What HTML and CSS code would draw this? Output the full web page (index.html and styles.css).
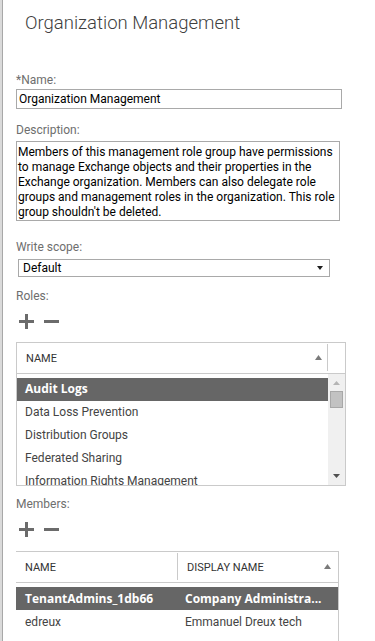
FILE: index.html
```html
<!DOCTYPE html>
<html>
<head>
<meta charset="utf-8">
<link rel="stylesheet" href="styles.css">
</head>
<body>
<div class="page">
  <div class="edge"></div>
  <div class="content">
    <h1 class="title">Organization Management</h1>

    <div class="label label-name">*Name:</div>
    <div class="input">Organization Management</div>

    <div class="label label-desc">Description:</div>
    <div class="textarea">Members of this management role group have permissions<br>to manage Exchange objects and their properties in the<br>Exchange organization. Members can also delegate role<br>groups and management roles in the organization. This role<br>group shouldn't be deleted.</div>

    <div class="label label-scope">Write scope:</div>
    <div class="select">
      <span>Default</span>
      <svg class="dd" width="6" height="4" viewBox="0 0 6 4"><path d="M0 0H6L3 4Z" fill="#1e1e1e"/></svg>
    </div>

    <div class="label label-roles">Roles:</div>
    <div class="toolbar tb-roles">
      <svg class="plus" width="15" height="15" viewBox="0 0 15 15"><rect x="0" y="6" width="15" height="3" fill="#6b6b6b"/><rect x="6" y="0" width="3" height="15" fill="#6b6b6b"/></svg>
      <svg class="minus" width="15" height="15" viewBox="0 0 15 15"><rect x="0" y="6" width="15" height="3" fill="#6b6b6b"/></svg>
    </div>

    <div class="table roles">
      <div class="thead">
        <div class="th th-roles"><span>NAME</span><svg class="sort" width="7" height="5" viewBox="0 0 7 5"><path d="M0 5L3.5 0L7 5Z" fill="#7a7a7a"/></svg></div>
        <div class="sep"></div>
        <div class="th-blank"></div>
      </div>
      <div class="tbody">
        <div class="list">
          <div class="row sel">Audit Logs</div>
          <div class="row">Data Loss Prevention</div>
          <div class="row">Distribution Groups</div>
          <div class="row">Federated Sharing</div>
          <div class="row">Information Rights Management</div>
        </div>
        <div class="scroll">
          <svg class="sc-up" width="7" height="4" viewBox="0 0 7 4"><path d="M0 4L3.5 0L7 4Z" fill="#b4b4b4"/></svg>
          <div class="thumb"></div>
          <div class="sc-space"></div>
          <svg class="sc-down" width="7" height="4" viewBox="0 0 7 4"><path d="M0 0H7L3.5 4Z" fill="#505050"/></svg>
        </div>
      </div>
    </div>

    <div class="label label-members">Members:</div>
    <div class="toolbar tb-members">
      <svg class="plus" width="15" height="15" viewBox="0 0 15 15"><rect x="0" y="6" width="15" height="3" fill="#6b6b6b"/><rect x="6" y="0" width="3" height="15" fill="#6b6b6b"/></svg>
      <svg class="minus" width="15" height="15" viewBox="0 0 15 15"><rect x="0" y="6" width="15" height="3" fill="#6b6b6b"/></svg>
    </div>

    <div class="table members">
      <div class="thead">
        <div class="th th-m1"><span>NAME</span></div>
        <div class="sep"></div>
        <div class="th th-m2"><span>DISPLAY NAME</span><svg class="sort" width="7" height="5" viewBox="0 0 7 5"><path d="M0 5L3.5 0L7 5Z" fill="#7a7a7a"/></svg></div>
      </div>
      <div class="mbody">
        <div class="mrow msel"><div class="c1">TenantAdmins_1db66</div><div class="c2">Company Administra...</div></div>
        <div class="mrow"><div class="c1">edreux</div><div class="c2">Emmanuel Dreux tech</div></div>
        <div class="mrow"><div class="c1"></div><div class="c2"></div></div>
      </div>
    </div>
  </div>
</div>
</body>
</html>
```

FILE: styles.css
```css
html, body {
  margin: 0;
  padding: 0;
  background: #fff;
}
body {
  font-family: Roboto, "Open Sans", sans-serif;
  font-size: 12px;
  color: #333;
  height: 641px;
  overflow: hidden;
}
.page {
  display: flex;
  min-height: 641px;
}
.edge {
  flex: none;
  width: 2px;
  background: #dadada;
  border-right: 1px solid #a8a8a8;
}
.content {
  flex: 1;
  padding-left: 13px;
}
.title {
  margin: 0;
  padding: 11px 0 0 9px;
  font-size: 18.5px;
  font-weight: 300;
  line-height: 24px;
  color: #404040;
}
.label {
  line-height: 16px;
  color: #6e6e6e;
}
.label-name { margin-top: 37px; }
.label-desc { margin-top: 13px; }
.label-scope { margin-top: 18px; }
.label-roles { margin-top: 11px; }
.label-members { margin-top: 10px; }

.input {
  margin-top: 1px;
  width: 326px;
  height: 20px;
  box-sizing: border-box;
  border: 1px solid #a9a9a9;
  padding: 0 2px;
  line-height: 18px;
  color: #000;
}
.textarea {
  margin-top: 3px;
  width: 324px;
  height: 80px;
  box-sizing: border-box;
  border: 1px solid #a9a9a9;
  padding: 3px 1px;
  line-height: 15px;
  color: #000;
  white-space: nowrap;
  overflow: hidden;
}
.select {
  margin: 4px 0 0 2px;
  width: 312px;
  height: 18px;
  box-sizing: border-box;
  border: 1px solid #a9a9a9;
  padding: 0 6px 0 4px;
  display: flex;
  align-items: center;
  justify-content: space-between;
  line-height: 16px;
  color: #000;
}
.dd { display: block; margin-top: -1px; }

.toolbar {
  display: flex;
  gap: 10px;
  padding-left: 3px;
  height: 15px;
}
.toolbar svg { display: block; }
.tb-roles { margin-top: 10px; }
.tb-members { margin-top: 10px; }

.table {
  box-sizing: border-box;
  border: 1px solid #cacaca;
}
.roles {
  margin-top: 13px;
  width: 330px;
  height: 144px;
  display: flex;
  flex-direction: column;
}
.thead {
  flex: none;
  display: flex;
  height: 30px;
  border-bottom: 1px solid #cacaca;
}
.th {
  display: flex;
  align-items: center;
  justify-content: space-between;
  padding-left: 9px;
  box-sizing: border-box;
  font-size: 11px;
  color: #333;
}
.th-roles {
  width: 310px;
  padding-right: 5px;
}
.sort { display: block; margin-top: -1px; }
.sep {
  flex: none;
  width: 1px;
  margin: 1px 0 2px;
  background: #cacaca;
}
.th-blank { flex: 1; }

.tbody {
  flex: 1;
  min-height: 0;
  display: flex;
}
.list {
  flex: 1;
  overflow: hidden;
  padding-top: 4px;
}
.row {
  height: 23px;
  line-height: 23px;
  padding-left: 8px;
  color: #444;
  white-space: nowrap;
}
.row.sel {
  background: #666;
  color: #fff;
  font-family: "Open Sans", Roboto, sans-serif;
  font-weight: 700;
  line-height: 22px;
}
.scroll {
  flex: none;
  width: 17px;
  background: #f0f0f0;
  display: flex;
  flex-direction: column;
  align-items: center;
  padding: 7px 0 7px;
  box-sizing: border-box;
}
.scroll svg { display: block; }
.thumb {
  margin-top: 6px;
  width: 13px;
  height: 17px;
  box-sizing: border-box;
  background: #c2c2c2;
  border: 1px solid #a8a8a8;
}
.sc-space { flex: 1; }

.members {
  margin-top: 14px;
  width: 323px;
  border-left: none;
  border-bottom: none;
  height: 120px;
}
.th-m1 { width: 161px; }
.th-m2 {
  width: 160px;
  padding-right: 7px;
}
.mbody { padding-top: 4px; }
.mrow {
  display: flex;
  height: 23px;
  line-height: 24px;
  color: #444;
  white-space: nowrap;
}
.mrow.msel {
  background: #666;
  color: #fff;
  font-family: "Open Sans", Roboto, sans-serif;
  font-weight: 700;
  line-height: 24px;
}
.mrow .c1 { width: 161px; padding-left: 9px; box-sizing: border-box; }
.mrow .c2 { width: 160px; padding-left: 8px; box-sizing: border-box; overflow: hidden; }
```
